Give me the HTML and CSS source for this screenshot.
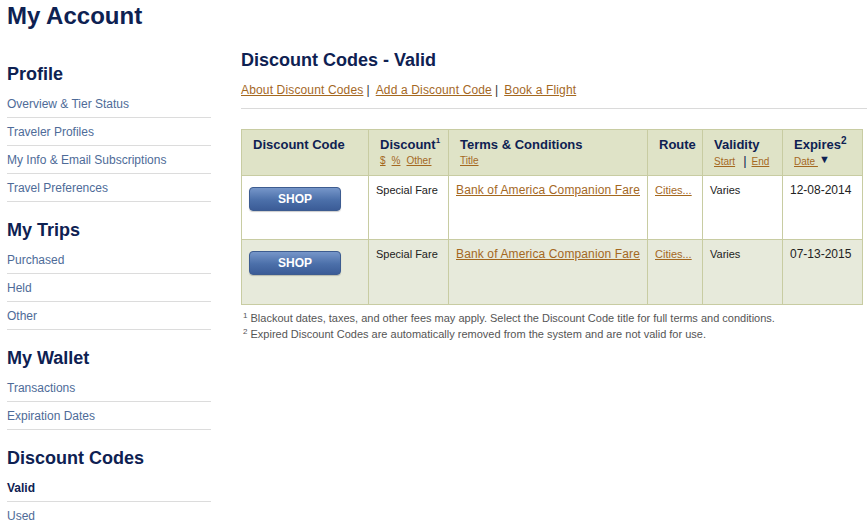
FILE: index.html
```html
<!DOCTYPE html>
<html>
<head>
<meta charset="utf-8">
<link rel="stylesheet" href="styles.css">
</head>
<body>
<h1 class="page-title">My Account</h1>
<div class="layout">
  <nav class="sidebar">
    <section class="nav-group">
      <h2 class="nav-title">Profile</h2>
      <a class="nav-link">Overview &amp; Tier Status</a>
      <a class="nav-link">Traveler Profiles</a>
      <a class="nav-link">My Info &amp; Email Subscriptions</a>
      <a class="nav-link">Travel Preferences</a>
    </section>
    <section class="nav-group">
      <h2 class="nav-title">My Trips</h2>
      <a class="nav-link">Purchased</a>
      <a class="nav-link">Held</a>
      <a class="nav-link">Other</a>
    </section>
    <section class="nav-group">
      <h2 class="nav-title">My Wallet</h2>
      <a class="nav-link">Transactions</a>
      <a class="nav-link">Expiration Dates</a>
    </section>
    <section class="nav-group">
      <h2 class="nav-title">Discount Codes</h2>
      <a class="nav-link active">Valid</a>
      <a class="nav-link last">Used</a>
    </section>
  </nav>
  <main class="main">
    <h2 class="main-title">Discount Codes - Valid</h2>
    <div class="subnav">
      <a class="brown-link">About Discount Codes</a><span class="sep">|</span><a class="brown-link">Add a Discount Code</a><span class="sep">|</span><a class="brown-link">Book a Flight</a>
    </div>
    <table class="codes">
      <colgroup>
        <col class="c1"><col class="c2"><col class="c3"><col class="c4"><col class="c5"><col class="c6">
      </colgroup>
      <thead>
        <tr>
          <th><div class="th-title">Discount Code</div></th>
          <th><div class="th-title">Discount<sup class="sup1">1</sup></div>
            <div class="th-sub"><a class="brown-link">$</a><a class="brown-link gap">%</a><a class="brown-link gap">Other</a></div></th>
          <th><div class="th-title">Terms &amp; Conditions</div>
            <div class="th-sub"><a class="brown-link">Title</a></div></th>
          <th><div class="th-title">Route</div></th>
          <th><div class="th-title">Validity</div>
            <div class="th-sub"><a class="brown-link">Start</a><span class="bar">|</span><a class="brown-link">End</a></div></th>
          <th><div class="th-title">Expires<sup class="sup2">2</sup></div>
            <div class="th-sub"><a class="brown-link">Date </a><span class="arrow">&#9660;</span></div></th>
        </tr>
      </thead>
      <tbody>
        <tr class="odd">
          <td class="btn-cell"><button class="shop">SHOP</button></td>
          <td class="small">Special Fare</td>
          <td><a class="brown-link wide">Bank of America Companion Fare</a></td>
          <td><a class="brown-link small">Cities...</a></td>
          <td class="small">Varies</td>
          <td class="date">12-08-2014</td>
        </tr>
        <tr class="even">
          <td class="btn-cell"><button class="shop">SHOP</button></td>
          <td class="small">Special Fare</td>
          <td><a class="brown-link wide">Bank of America Companion Fare</a></td>
          <td><a class="brown-link small">Cities...</a></td>
          <td class="small">Varies</td>
          <td class="date">07-13-2015</td>
        </tr>
      </tbody>
    </table>
    <div class="notes">
      <p class="note"><sup>1</sup> Blackout dates, taxes, and other fees may apply. Select the Discount Code title for full terms and conditions.</p>
      <p class="note"><sup>2</sup> Expired Discount Codes are automatically removed from the system and are not valid for use.</p>
    </div>
  </main>
</div>
</body>
</html>
```

FILE: styles.css
```css
* { box-sizing: border-box; }
html, body { margin: 0; padding: 0; background: #fff; }
body {
  font-family: "Liberation Sans", Arial, sans-serif;
  color: #222;
  padding: 0 0 0 7px;
  width: 867px;
  height: 527px;
  overflow: hidden;
}
.page-title {
  margin: 0;
  padding-top: 2px;
  font-size: 24px;
  line-height: 28px;
  font-weight: bold;
  color: #0e2152;
}
.layout {
  display: flex;
  gap: 30px;
  margin-top: 18px;
}
.sidebar {
  width: 204px;
  flex: none;
  display: flex;
  flex-direction: column;
  gap: 17px;
  margin-top: 15px;
}
.nav-group { display: flex; flex-direction: column; }
.nav-title {
  margin: 0 0 5px;
  font-size: 18px;
  line-height: 22px;
  font-weight: bold;
  color: #0e2152;
}
.nav-link {
  display: block;
  font-size: 12px;
  line-height: 14px;
  padding: 7px 0 6px;
  color: #4e6b98;
  border-bottom: 1px solid #dcdcdc;
}
.nav-link.active { color: #0e2152; font-weight: bold; }
.nav-link.last { border-bottom: none; }

.main { flex: 1; min-width: 0; }
.main-title {
  margin: 0;
  padding-top: 1px;
  font-size: 18px;
  line-height: 22px;
  font-weight: bold;
  color: #0e2152;
}
.subnav {
  margin-top: 12px;
  font-size: 12px;
  line-height: 14px;
  color: #333;
  padding-bottom: 11px;
  border-bottom: 1px solid #dadada;
  letter-spacing: 0.15px;
}
.sep { margin: 0 6px 0 3px; }
.brown-link { color: #a4681f; text-decoration: underline; }
.brown-link.wide { letter-spacing: 0.13px; }

.codes {
  margin-top: 20px;
  width: 621px;
  border-collapse: collapse;
  table-layout: fixed;
  border: 1px solid #c8cca2;
}
.c1 { width: 127px; }
.c2 { width: 80px; }
.c3 { width: 199px; }
.c4 { width: 55px; }
.c5 { width: 80px; }
.c6 { width: 80px; }
.codes th, .codes td {
  border: 1px solid #c8cca2;
  vertical-align: top;
  text-align: left;
}
.codes thead tr { background: #dfe3c7; height: 46px; }
.codes th { padding: 7px 4px 0 11px; }
.th-title {
  font-size: 13px;
  line-height: 15px;
  font-weight: bold;
  color: #0e2152;
  white-space: nowrap;
}
.sup1 { font-size: 8px; vertical-align: 6px; line-height: 0; }
.sup2 { font-size: 10px; vertical-align: 5px; line-height: 0; }
.th-sub {
  font-size: 10px;
  line-height: 12px;
  font-weight: normal;
  margin-top: 3px;
  white-space: nowrap;
}
.th-sub .gap { margin-left: 6px; }
.bar { color: #0e2152; font-size: 13px; margin: 0 5px 0 8px; }
.arrow { color: #0e2152; font-size: 11px; margin-left: 1px; position: relative; top: -2px; }
.codes tbody tr.odd { background: #fff; height: 64px; }
.codes tbody tr.even { background: #e7eadb; height: 65px; }
.codes td { padding: 7px 4px 0 7px; font-size: 12px; line-height: 14px; color: #222; }
.codes td.small { font-size: 11px; }
.codes td .small { font-size: 11px; }
.codes td.btn-cell { padding: 11px 0 0 7px; }
.codes td.date { font-size: 12px; }
.shop {
  display: block;
  width: 92px;
  height: 24px;
  border: 1px solid #3d5c90;
  border-radius: 4px;
  background: linear-gradient(#7696c9, #4b6fa9 55%, #3b5c97);
  color: #fff;
  font-family: "Liberation Sans", Arial, sans-serif;
  font-weight: bold;
  font-size: 12px;
  padding: 0;
  box-shadow: 0 1px 1px rgba(0,0,0,0.2);
}
.notes { margin-top: 5px; padding-left: 2px; }
.note {
  margin: 0;
  font-size: 11px;
  line-height: 16px;
  color: #555;
}
.note sup { font-size: 8px; vertical-align: 4px; line-height: 0; }
```
